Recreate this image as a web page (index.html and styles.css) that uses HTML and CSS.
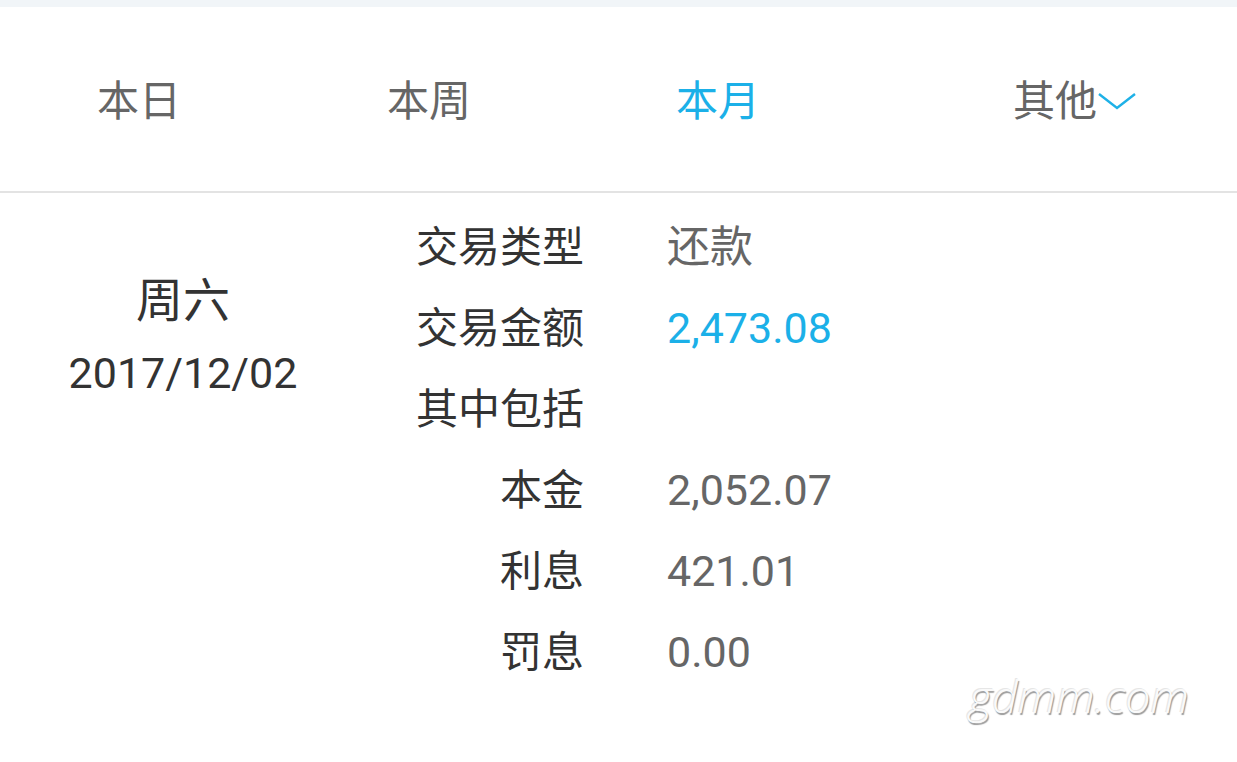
FILE: index.html
```html
<!DOCTYPE html>
<html>
<head>
	<title>交易明细</title>
	<meta name="viewport" content="width=device-width, initial-scale=1.0">
	<link rel="stylesheet" href="styles.css">
</head>
<body>
  <div class="topStrip"></div>

  <div class="tabs">
  	<div class="tab">本日</div>
  	<div class="tab">本周</div>
  	<div class="tab active">本月</div>
  	<div class="tab more">
  		其他
  		<svg class="chevron" width="40" height="24" viewBox="0 0 40 24">
  			<path d="M2 6 L20 20 L38 6" fill="none" stroke="#1eb1e7" stroke-width="2.4"/>
  		</svg>
  	</div>
  </div>

  <div class="detail">
  	<div class="day">
  		<div class="week">周六</div>
  		<div class="date">2017/12/02</div>
  	</div>

  	<div class="label">交易类型</div>
  	<div class="value">还款</div>

  	<div class="label">交易金额</div>
  	<div class="value blue">2,473.08</div>

  	<div class="label">其中包括</div>
  	<div class="value"></div>

  	<div class="label">本金</div>
  	<div class="value">2,052.07</div>

  	<div class="label">利息</div>
  	<div class="value">421.01</div>

  	<div class="label">罚息</div>
  	<div class="value">0.00</div>
  </div>

  <div class="mark">gdmm.com</div>
</body>
</html>
```

FILE: styles.css
```css
*{
	box-sizing: border-box;
	font-family: Roboto, "Noto Sans CJK SC", sans-serif;
}
body{
	margin: 0;
	width: 1237px;
	height: 762px;
	background: #fff;
	position: relative;
	overflow: hidden;
}
.topStrip{
	height: 7px;
	background: #f1f5f8;
}

.tabs{
	height: 186px;
	display: grid;
	grid-template-columns: 290px 289px 337px auto;
	align-items: center;
	padding-left: 97px;
	padding-top: 6px;
	border-bottom: 2px solid #e3e3e3;
}
.tab{
	font-size: 42px;
	color: #666;
	line-height: 50px;
}
.tab.active{
	color: #1bb0e8;
}
.tab.more{
	display: flex;
	align-items: center;
}
.chevron{
	margin-top: -4px;
}

.detail{
	display: grid;
	grid-template-columns: 366px 218px auto;
	grid-auto-rows: 81px;
	padding-top: 14px;
}
.day{
	grid-column: 1;
	grid-row: 1 / span 3;
	display: flex;
	flex-direction: column;
	align-items: center;
	padding-top: 58px;
	color: #333;
}
.week{
	font-size: 47px;
	line-height: 72px;
}
.date{
	font-size: 43px;
	line-height: 72px;
}
.label{
	grid-column: 2;
	text-align: right;
	font-size: 42px;
	line-height: 81px;
	color: #333;
}
.value{
	grid-column: 3;
	padding-left: 83px;
	font-size: 43px;
	line-height: 81px;
	color: #666;
}
.value.blue{
	color: #1bb0e8;
}

.mark{
	position: absolute;
	right: 48px;
	bottom: 36px;
	font-family: "Open Sans", sans-serif;
	font-style: italic;
	font-weight: 300;
	font-size: 45px;
	color: #fafafa;
	text-shadow: 1px 2px 1px #9a9a9a, -1px -1px 0 #e6e6e6;
}
```
